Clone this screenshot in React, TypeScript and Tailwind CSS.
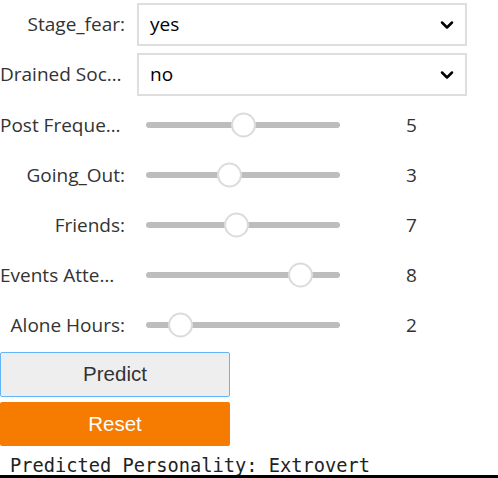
import { ChevronDown } from "lucide-react";

const dropdowns = [
  { label: "Stage_fear:", value: "yes" },
  { label: "Drained Social_media:", value: "no" },
];

// pos = where the thumb sits along the track, 0..1
const sliders = [
  { label: "Post Frequency:", value: 5, pos: 0.5 },
  { label: "Going_Out:", value: 3, pos: 0.421 },
  { label: "Friends:", value: 7, pos: 0.462 },
  { label: "Events Attended:", value: 8, pos: 0.841 },
  { label: "Alone Hours:", value: 2, pos: 0.135 },
];

function Label({ text }: { text: string }) {
  return (
    <div className="w-[125px] shrink-0 truncate text-right text-[19px] text-[#333]">
      {text}
    </div>
  );
}

export default function App() {
  return (
    <div className="w-[498px] h-[478px] bg-white overflow-hidden flex flex-col font-['Open_Sans',sans-serif]">
      <div className="flex flex-col gap-[7px] pt-[3px]">
        {dropdowns.map((d) => (
          <div key={d.label} className="flex items-center">
            <Label text={d.label} />
            <div className="ml-[12px] w-[330px] h-[43px] border-2 border-[#dedede] bg-white flex items-center justify-between pl-[11px] pr-[8px]">
              <span className="text-[19px] text-black">{d.value}</span>
              <ChevronDown className="w-[20px] h-[20px] text-black" strokeWidth={3} />
            </div>
          </div>
        ))}
      </div>

      <div className="flex flex-col mt-[4px]">
        {sliders.map((s) => (
          <div key={s.label} className="flex items-center h-[50px]">
            <Label text={s.label} />
            <div className="relative ml-[21px] w-[194px] h-[6px] rounded-full bg-[#bdbdbd]">
              <div
                className="absolute top-1/2 -translate-y-1/2 w-[25px] h-[25px] rounded-full bg-white border-2 border-[#dcdcdc]"
                style={{ left: `${s.pos * 170 - 0.5}px` }}
              />
            </div>
            <div className="ml-[66px] text-[19px] text-[#333]">{s.value}</div>
          </div>
        ))}
      </div>

      <button className="mt-[2px] w-[230px] h-[45px] bg-[#eeeeee] border border-[#64b5f6] rounded-[2px] text-[20.5px] text-[#333] font-['Liberation_Sans',Arial,sans-serif]">
        Predict
      </button>
      <button className="mt-[5px] w-[230px] h-[44px] bg-[#f57c00] rounded-[2px] text-[20.5px] text-white font-['Liberation_Sans',Arial,sans-serif]">
        Reset
      </button>

      <div className="h-[29px] overflow-hidden pt-[11px] pl-[10px]">
        <pre className="m-0 text-[18.7px] leading-[18px] text-[#222] font-['DejaVu_Sans_Mono',monospace]">
          Predicted Personality: Extrovert
        </pre>
      </div>
      <div className="h-[3px] bg-black" />
    </div>
  );
}
